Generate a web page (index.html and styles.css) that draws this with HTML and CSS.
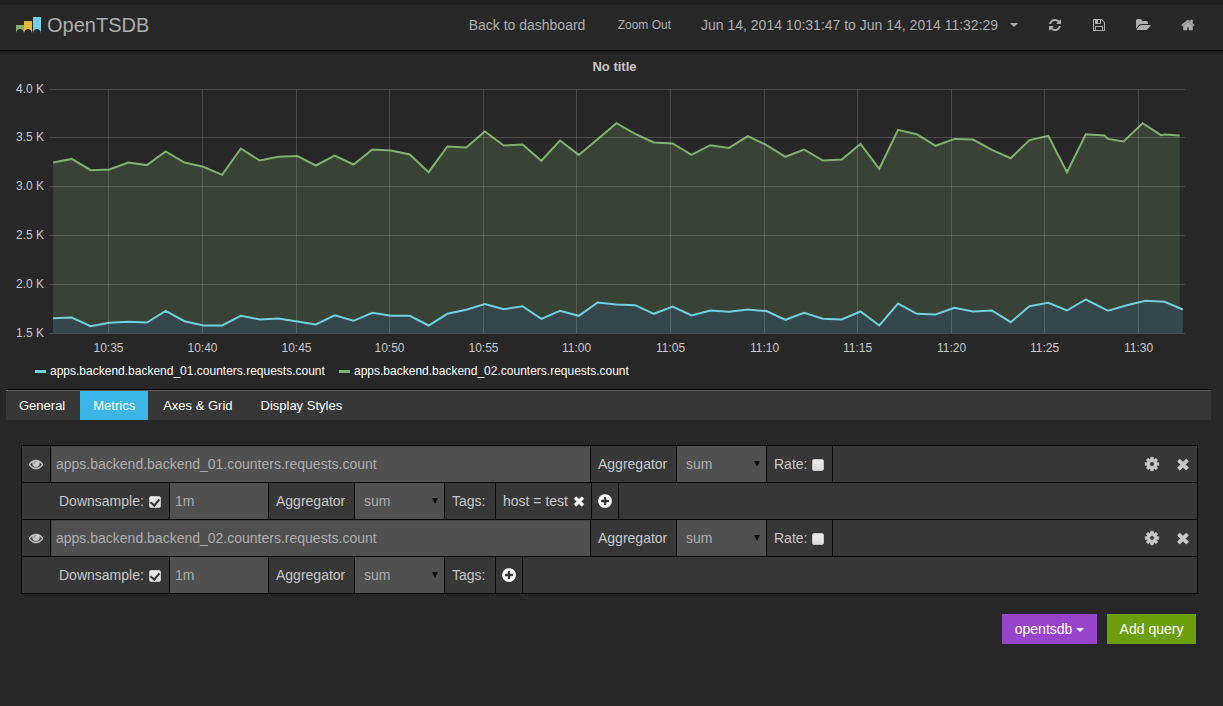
FILE: index.html
```html
<!DOCTYPE html>
<html lang="en">
  <head>
    <meta charset="UTF-8" />
    <meta name="viewport" content="width=device-width, initial-scale=1.0" />
    <title>OpenTSDB</title>
    <link rel="stylesheet" href="styles.css">
  </head>
  <body>
    <svg class="icon-defs" aria-hidden="true">
      <symbol id="icon-times" viewBox="0 0 1792 1792"><path d="M1490 1322q0 40-28 68l-136 136q-28 28-68 28t-68-28l-294-294-294 294q-28 28-68 28t-68-28l-136-136q-28-28-28-68t28-68l294-294-294-294q-28-28-28-68t28-68l136-136q28-28 68-28t68 28l294 294 294-294q28-28 68-28t68 28l136 136q28 28 28 68t-28 68l-294 294 294 294q28 28 28 68z"/></symbol>
      <symbol id="icon-plus" viewBox="0 0 1792 1792"><path d="M1344 960v-128q0-26-19-45t-45-19h-256v-256q0-26-19-45t-45-19h-128q-26 0-45 19t-19 45v256h-256q-26 0-45 19t-19 45v128q0 26 19 45t45 19h256v256q0 26 19 45t45 19h128q26 0 45-19t19-45v-256h256q26 0 45-19t19-45zm320-64q0 209-103 385.5t-279.5 279.5-385.5 103-385.5-103-279.5-279.5-103-385.5 103-385.5 279.5-279.5 385.5-103 385.5 103 279.5 279.5 103 385.5z"/></symbol>
      <symbol id="icon-cog" viewBox="0 0 1792 1792"><path d="M1152 896q0-106-75-181t-181-75-181 75-75 181 75 181 181 75 181-75 75-181zm512-109v222q0 12-8 23t-20 13l-185 28q-19 54-39 91 35 50 107 138 10 12 10 25t-9 23q-27 37-99 108t-94 71q-12 0-26-9l-138-108q-44 23-91 38-16 136-29 186-7 28-36 28h-222q-14 0-24.5-8.5t-11.5-21.5l-28-184q-49-16-90-37l-141 107q-10 9-25 9-14 0-25-11-126-114-165-168-7-10-7-23 0-12 8-23 15-21 51-66.5t54-70.5q-27-50-41-99l-183-27q-13-2-21-12.5t-8-23.5v-222q0-12 8-23t19-13l186-28q14-46 39-92-40-57-107-138-10-12-10-24 0-10 9-23 26-36 98.5-107.5t94.5-71.5q13 0 26 10l138 107q44-23 91-38 16-136 29-186 7-28 36-28h222q14 0 24.5 8.5t11.5 21.5l28 184q49 16 90 37l142-107q9-9 24-9 13 0 25 10 129 119 165 170 7 8 7 22 0 12-8 23-15 21-51 66.5t-54 70.5q26 50 41 98l183 28q13 2 21 12.5t8 23.5z"/></symbol>
      <symbol id="icon-home" viewBox="0 0 1792 1792"><path d="M1472 992v480q0 26-19 45t-45 19h-384v-384h-256v384h-384q-26 0-45-19t-19-45v-480q0-1 .5-3t.5-3l575-474 575 474q1 2 1 6zm223-69l-62 74q-8 9-21 11h-3q-13 0-21-7l-692-577-692 577q-12 8-24 7-13-2-21-11l-62-74q-8-10-7-23.5t11-21.5l719-599q32-26 76-26t76 26l244 204v-195q0-14 9-23t23-9h192q14 0 23 9t9 23v408l219 182q10 8 11 21.5t-7 23.5z"/></symbol>
      <symbol id="icon-folder" viewBox="0 0 1920 1792"><path d="M1879 952q0 31-31 66l-336 396q-43 51-120.5 86.5t-143.5 35.5h-1088q-34 0-60.5-13t-26.5-43q0-31 31-66l336-396q43-51 120.5-86.5t143.5-35.5h1088q34 0 60.5 13t26.5 43zm-343-344v160h-832q-94 0-197 47.5t-164 119.5l-337 396-5 6q0-4-.5-12.5t-.5-12.5v-960q0-92 66-158t158-66h320q92 0 158 66t66 158v32h544q92 0 158 66t66 158z"/></symbol>
      <symbol id="icon-refresh" viewBox="0 0 1792 1792"><path d="M1639 1056q0 5-1 7-64 268-268 434.5t-478 166.5q-146 0-282.5-55t-243.5-157l-129 129q-19 19-45 19t-45-19-19-45v-448q0-26 19-45t45-19h448q26 0 45 19t19 45-19 45l-137 137q71 66 161 102t187 36q134 0 250-65t186-179q11-17 53-117 8-23 30-23h192q13 0 22.5 9.5t9.5 22.5zm25-800v448q0 26-19 45t-45 19h-448q-26 0-45-19t-19-45 19-45l138-138q-148-137-349-137-134 0-250 65t-186 179q-11 17-53 117-8 23-30 23h-199q-13 0-22.5-9.5t-9.5-22.5v-7q65-268 270-434.5t480-166.5q146 0 284 55.5t245 156.5l130-129q19-19 45-19t45 19 19 45z"/></symbol>
      <symbol id="icon-save" viewBox="0 0 1792 1792"><path d="M512 1536h768v-384h-768v384zm896 0h128v-896q0-14-10-38.5t-20-34.5l-281-281q-10-10-34-20t-39-10v416q0 40-28 68t-68 28h-576q-40 0-68-28t-28-68v-416h-128v1280h128v-416q0-40 28-68t68-28h832q40 0 68 28t28 68v416zm-384-928v-320q0-13-9.5-22.5t-22.5-9.5h-192q-13 0-22.5 9.5t-9.5 22.5v320q0 13 9.5 22.5t22.5 9.5h192q13 0 22.5-9.5t9.5-22.5zm640 32v928q0 40-28 68t-68 28h-1344q-40 0-68-28t-28-68v-1344q0-40 28-68t68-28h928q40 0 88 20t76 48l280 280q28 28 48 76t20 88z"/></symbol>
      <symbol id="icon-eye" viewBox="0 0 1792 1792"><path d="M1664 960q-152-236-381-353 61 104 61 225 0 185-131.5 316.5t-316.5 131.5-316.5-131.5-131.5-316.5q0-121 61-225-229 117-381 353 133 205 333.5 326.5t434.5 121.5 434.5-121.5 333.5-326.5zm-720-384q0-20-14-34t-34-14q-125 0-214.5 89.5t-89.5 214.5q0 20 14 34t34 14 34-14 14-34q0-86 61-147t147-61q20 0 34-14t14-34zm848 384q0 34-20 69-140 230-376.5 368.5t-499.5 138.5-499.5-139-376.5-368q-20-35-20-69t20-69q140-229 376.5-368t499.5-139 499.5 139 376.5 368q20 35 20 69z"/></symbol>
    </svg>

    <header class="navbar">
      <a class="brand" href="#">
        <svg class="logo" viewBox="0 0 25 16" aria-hidden="true">
          <path fill="#7eb26d" d="M0 8h8v8q-1-4-4-4t-4 4z" />
          <path fill="#eab839" d="M8 4h8v12q-1-4-4-4t-4 4z" />
          <path fill="#6ed0e0" d="M17 0h8v16q-1-4-4-4t-4 4z" />
        </svg>
        <span>OpenTSDB</span>
      </a>
      <nav class="nav">
        <a class="back" href="#">Back to dashboard</a>
        <a class="small" href="#">Zoom Out</a>
        <a class="time" href="#">Jun 14, 2014 10:31:47 to Jun 14, 2014 11:32:29 <span class="caret"></span></a>
        <a href="#" aria-label="Refresh"><svg class="icon"><use href="#icon-refresh" /></svg></a>
        <a href="#" aria-label="Save"><svg class="icon"><use href="#icon-save" /></svg></a>
        <a href="#" aria-label="Open"><svg class="icon wide"><use href="#icon-folder" /></svg></a>
        <a href="#" aria-label="Home"><svg class="icon bold"><use href="#icon-home" /></svg></a>
      </nav>
    </header>

    <section class="panel">
      <h1 class="panel-title">No title</h1>
      <svg class="chart" id="chart"></svg>
      <div class="legend">
        <span class="legend-item blue">apps.backend.backend_01.counters.requests.count</span>
        <span class="legend-item green">apps.backend.backend_02.counters.requests.count</span>
      </div>
    </section>

    <section class="editor">
      <nav class="tabs">
        <a href="#">General</a>
        <a class="active" href="#">Metrics</a>
        <a href="#">Axes &amp; Grid</a>
        <a href="#">Display Styles</a>
      </nav>

      <div class="queries">
        <div class="row">
          <button class="cell" aria-label="Toggle query"><svg class="icon bold"><use href="#icon-eye" /></svg></button>
          <input class="cell metric" type="text" aria-label="Metric" value="apps.backend.backend_01.counters.requests.count" />
          <label class="cell name" for="agg-1">Aggregator</label>
          <div class="cell select"><select id="agg-1"><option>sum</option></select></div>
          <label class="cell rate">Rate: <input type="checkbox" /></label>
          <div class="actions">
            <button aria-label="Options"><svg class="icon large bold"><use href="#icon-cog" /></svg></button>
            <button aria-label="Remove query"><svg class="icon large bold"><use href="#icon-times" /></svg></button>
          </div>
        </div>
        <div class="row">
          <label class="cell indent">Downsample: <input type="checkbox" checked /></label>
          <input class="cell interval" type="text" aria-label="Interval" value="1m" />
          <label class="cell name" for="down-1">Aggregator</label>
          <div class="cell select"><select id="down-1"><option>sum</option></select></div>
          <span class="cell tags">Tags:</span>
          <span class="cell tag">host = test <button aria-label="Remove tag"><svg class="icon bold"><use href="#icon-times" /></svg></button></span>
          <button class="cell add" aria-label="Add tag"><svg class="icon large"><use href="#icon-plus" /></svg></button>
        </div>
        <div class="row">
          <button class="cell" aria-label="Toggle query"><svg class="icon bold"><use href="#icon-eye" /></svg></button>
          <input class="cell metric" type="text" aria-label="Metric" value="apps.backend.backend_02.counters.requests.count" />
          <label class="cell name" for="agg-2">Aggregator</label>
          <div class="cell select"><select id="agg-2"><option>sum</option></select></div>
          <label class="cell rate">Rate: <input type="checkbox" /></label>
          <div class="actions">
            <button aria-label="Options"><svg class="icon large bold"><use href="#icon-cog" /></svg></button>
            <button aria-label="Remove query"><svg class="icon large bold"><use href="#icon-times" /></svg></button>
          </div>
        </div>
        <div class="row">
          <label class="cell indent">Downsample: <input type="checkbox" checked /></label>
          <input class="cell interval" type="text" aria-label="Interval" value="1m" />
          <label class="cell name" for="down-2">Aggregator</label>
          <div class="cell select"><select id="down-2"><option>sum</option></select></div>
          <span class="cell tags">Tags:</span>
          <button class="cell add" aria-label="Add tag"><svg class="icon large"><use href="#icon-plus" /></svg></button>
        </div>
      </div>

      <div class="buttons">
        <button class="btn purple">opentsdb <span class="caret"></span></button>
        <button class="btn success">Add query</button>
      </div>
    </section>

    <script src="chart.js"></script>
  </body>
</html>
```
FILE: styles.css
```css
* {
  box-sizing: border-box;
}

body {
  margin: 0;
  background: #272727;
  color: #c8c8c8;
  font-family: "Liberation Sans", Arial, sans-serif;
  font-size: 14px;
  line-height: 20px;
}

a {
  color: inherit;
  text-decoration: none;
}

button,
input,
select {
  font: inherit;
  color: inherit;
  margin: 0;
}

button {
  background: none;
  border: 0;
  padding: 0;
  cursor: pointer;
}

.icon-defs {
  display: none;
}

.icon {
  display: block;
  width: 14px;
  height: 14px;
  fill: currentColor;
}

.icon.wide {
  width: 15px;
}

.icon.large {
  width: 16px;
  height: 16px;
}

.icon.bold {
  stroke: currentColor;
  stroke-width: 70px;
}

.caret {
  display: inline-block;
  vertical-align: middle;
  border: 4px solid transparent;
  border-top-color: currentColor;
  border-bottom: 0;
}

/* top bar */
.navbar {
  display: flex;
  align-items: center;
  justify-content: space-between;
  height: 54px;
  padding: 0 13px 0 16px;
  border-top: 5px solid #1f1f1f;
  border-bottom: 3px solid #1f1f1f;
  box-shadow: inset 0 -1px #000;
  color: #adadad;
}

.brand {
  display: flex;
  align-items: center;
  gap: 6px;
  padding-bottom: 6px;
  font-size: 20px;
}

.logo {
  width: 25px;
  height: 16px;
}

.nav {
  display: flex;
  align-items: center;
  padding-bottom: 6px;
}

.nav a {
  padding: 0 15px;
  white-space: nowrap;
}

.nav .back {
  min-width: 149px;
}

.nav .time {
  display: flex;
  align-items: center;
  justify-content: space-between;
  min-width: 347px;
}

.nav .small {
  font-size: 12px;
}

/* graph */
.panel {
  padding: 0 0 7px 6px;
}

.panel-title {
  margin: 0;
  padding: 3px 0;
  font-size: 13px;
  text-align: center;
}

.chart {
  display: block;
  width: calc(100% - 12px);
  height: 278px;
  font-size: 12px;
}

.chart text {
  fill: #c8c8c8;
}

.legend {
  display: flex;
  gap: 8px;
  padding: 3px 29px 2px;
  color: #fff;
  font-size: 12px;
}

.legend-item {
  display: flex;
  align-items: center;
  gap: 4px;
  min-width: 296px;
}

.legend-item::before {
  content: "";
  width: 11px;
  height: 3px;
  background: #6ed0e0;
}

.legend-item.green::before {
  background: #7eb26d;
}

/* editor */
.editor {
  padding: 0 12px 0 6px;
}

.tabs {
  display: flex;
  gap: 2px;
  background: #373737;
  border-top: 1px solid #5a5a5a;
  box-shadow: 0 -1px #000;
  color: #fff;
  font-size: 13px;
}

.tabs a {
  padding: 5px 13px;
  line-height: 19px;
}

.tabs .active {
  background: #3bb6e6;
}

.queries {
  margin: 25px 13px 20px 15px;
  border: 1px solid #060606;
  border-bottom: 0;
}

.row {
  display: flex;
  height: 37px;
  background: #373737;
  border-bottom: 1px solid #060606;
}

.cell {
  display: flex;
  align-items: center;
  padding: 0 7px;
  border: 0;
  border-right: 1px solid #060606;
  border-radius: 0;
  white-space: nowrap;
}

.cell.indent {
  width: 148px;
  padding-left: 37px;
}

.cell.name {
  width: 86px;
}

.cell.rate {
  width: 66px;
}

.cell.tags {
  width: 51px;
}

.cell.tag {
  width: 96px;
}

.cell.metric,
.cell.interval {
  min-width: 0;
  padding: 0 5px;
  background: #505050;
  color: #adadad;
}

.metric {
  width: 540px;
  box-shadow: inset 1px 1px #454545;
}

.interval {
  width: 99px;
}

.cell.select {
  position: relative;
  width: 90px;
  padding: 0;
  background: #505050;
}

.select select {
  width: 100%;
  height: 100%;
  padding: 0 9px;
  appearance: none;
  background: transparent;
  border: 0;
  color: #adadad;
}

.select::after {
  content: "";
  position: absolute;
  right: 6px;
  top: 15px;
  border: 3px solid transparent;
  border-top: 6px solid #0c0c0c;
  border-bottom: 0;
  pointer-events: none;
}

input[type="checkbox"] {
  display: grid;
  place-items: center;
  width: 12px;
  height: 12px;
  margin: 2px 1px 0 auto;
  appearance: none;
  background: linear-gradient(#ededed, #dcdcdc);
  border: 1px solid #c4c4c4;
  border-radius: 2px;
}

input[type="checkbox"]:checked::before {
  content: "";
  width: 4px;
  height: 7px;
  margin-bottom: 2px;
  border: solid #333;
  border-width: 0 2px 2px 0;
  transform: rotate(40deg);
}

.tag {
  justify-content: space-between;
}

.tag button {
  margin-right: -2px;
}

.tag button,
.add {
  color: #fff;
}

.cell.add {
  padding: 0 5px;
}

.actions {
  display: flex;
  align-items: center;
  gap: 15px;
  margin-left: auto;
  padding-right: 6px;
}

.buttons {
  display: flex;
  justify-content: flex-end;
  gap: 10px;
  padding-right: 15px;
}

.btn {
  min-width: 89px;
  padding: 5px 12px;
  color: #fff;
}

.btn.purple {
  min-width: 95px;
  background: #9944cc;
}

.btn.success {
  background: #6c9f0b;
}
```
FILE: chart.js
```js
const chart = document.getElementById("chart");

// plot area inside the svg
const left = 43;
const right = 26;
const top_ = 9;
const bottom = 253;

// seconds, counted from 10:31:47
const duration = 3642;
const firstTick = 192.3;
const firstPoint = 13;
const step = 60.2;

const series = [
  {
    line: "#7eb26d",
    fill: "#384235",
    values: [
      3247, 3284, 3168, 3175, 3247, 3220, 3360, 3247, 3203, 3121, 3390, 3267,
      3305, 3315, 3216, 3319, 3226, 3380, 3370, 3329, 3148, 3411, 3402, 3565,
      3421, 3431, 3264, 3472, 3325, 3486, 3650, 3541, 3452, 3442, 3325, 3424,
      3397, 3517, 3424, 3305, 3380, 3267, 3278, 3438, 3182, 3582, 3537, 3418,
      3489, 3483, 3377, 3291, 3476, 3520, 3148, 3537
    ],
    // late samples are not on the minute
    tail: [[3371, 3524], [3382, 3489], [3432, 3462], [3493, 3650], [3552, 3527], [3564, 3534], [3612, 3524]]
  },
  {
    line: "#6ed0e0",
    fill: "#36474b",
    values: [
      1652, 1659, 1570, 1604, 1615, 1608, 1727, 1621, 1577, 1577, 1676, 1639,
      1649, 1618, 1587, 1680, 1625, 1707, 1676, 1676, 1577, 1697, 1738, 1796,
      1744, 1775, 1645, 1727, 1676, 1813, 1792, 1785, 1697, 1772, 1680, 1731,
      1717, 1741, 1724, 1635, 1707, 1645, 1639, 1720, 1577, 1802, 1697, 1690,
      1758, 1720, 1731, 1611, 1775, 1809, 1731, 1843
    ],
    tail: [[3382, 1727], [3443, 1785], [3502, 1830], [3564, 1820], [3622, 1741]]
  }
];

function draw() {
  const width = chart.clientWidth;
  const plotRight = width - right;
  const x = (sec) => left + (sec / duration) * (plotRight - left);
  const y = (value) => bottom - ((value - 1500) / 2500) * (bottom - top_);
  let html = "";

  series.forEach((s) => {
    const points = s.values.map((v, i) => [i * step, v]).concat(s.tail);
    const line = points.map(([t, v]) => `${x(t + firstPoint).toFixed(1)},${y(v).toFixed(1)}`).join(" ");
    const start = x(firstPoint);
    const end = x(points[points.length - 1][0] + firstPoint);
    html += `<polygon fill="${s.fill}" points="${start},${bottom} ${line} ${end},${bottom}" />`;
    html += `<polyline fill="none" stroke="${s.line}" stroke-width="2" points="${line}" />`;
  });

  let grid = "";
  for (let v = 1500; v <= 4000; v += 500) {
    const gy = Math.floor(y(v)) + 0.5;
    grid += `M${left} ${gy}H${plotRight}`;
    html += `<text x="${left - 5}" y="${gy + 3.5}" text-anchor="end">${(v / 1000).toFixed(1)} K</text>`;
  }
  for (let i = 0; i < 12; i++) {
    const gx = Math.floor(x(firstTick + i * 300)) + 0.5;
    const minutes = 35 + i * 5;
    const label = `${10 + Math.floor(minutes / 60)}:${String(minutes % 60).padStart(2, "0")}`;
    grid += `M${gx} ${top_}V${bottom}`;
    html += `<text x="${gx}" y="272" text-anchor="middle">${label}</text>`;
  }
  html += `<path d="${grid}" stroke="#c8c8c8" stroke-opacity="0.22" />`;

  chart.innerHTML = html;
}

draw();
window.addEventListener("resize", draw);
```
